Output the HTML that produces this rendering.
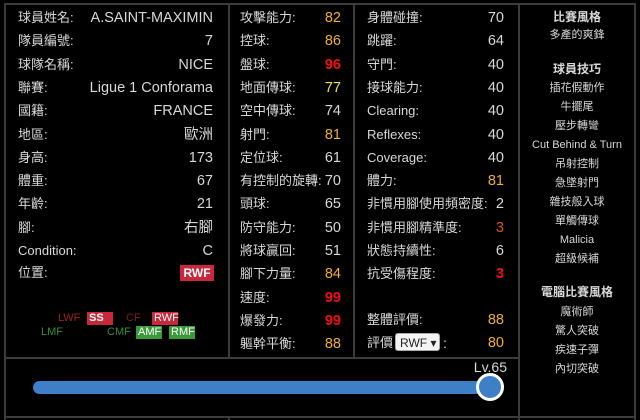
<!DOCTYPE html>
<html><head><meta charset="utf-8"><style>
body{margin:0;width:640px;height:420px;background:#000;overflow:hidden;font-family:"Liberation Sans","Noto Sans CJK TC",sans-serif;color:#d8d8d8;font-size:14px;position:relative}
.a{position:absolute;white-space:nowrap;line-height:16px}
.lb{font-size:13px}
.r{text-align:right;font-size:14.5px}
.line{position:absolute;background:#3c3c3c}
.y{color:#f0b030}.rd{color:#f01010;font-weight:bold}.g{color:#e8e840}.o{color:#e05020}
.c{position:absolute;text-align:center;width:120px;left:517px;font-size:11px;line-height:14px}
.b{font-weight:bold;font-size:12px}
.p{position:absolute;font-size:11px;line-height:13px;padding:0 2px}
</style></head><body>
<div class="line" style="left:4px;top:3px;width:632px;height:2px"></div>
<div class="line" style="left:4px;top:3px;width:2px;height:417px"></div>
<div class="line" style="left:228px;top:3px;width:2px;height:355px"></div>
<div class="line" style="left:353px;top:3px;width:2px;height:355px"></div>
<div class="line" style="left:518px;top:3px;width:2px;height:417px"></div>
<div class="line" style="left:634px;top:3px;width:2px;height:417px"></div>
<div class="line" style="left:4px;top:357px;width:516px;height:2px"></div>
<div class="line" style="left:4px;top:416px;width:632px;height:2px"></div>
<div class="line" style="left:228px;top:416px;width:2px;height:4px"></div>

<script>
function row(x,rx,y,l,v,cls){document.write('<div class="a lb" style="left:'+x+'px;top:'+(y-8)+'px">'+l+'</div><div class="a r '+(cls||'')+'" style="right:'+(640-rx)+'px;top:'+(y-8)+'px">'+v+'</div>');}
var ys=[];for(var i=0;i<14;i++)ys.push(Math.round(18+i*23.3));
var L=[["球員姓名:","A.SAINT-MAXIMIN"],["隊員編號:","7"],["球隊名稱:","NICE"],["聯賽:","Ligue 1 Conforama"],["國籍:","FRANCE"],["地區:","歐洲"],["身高:","173"],["體重:","67"],["年齡:","21"],["腳:","右腳"],["Condition:","C"]];
L.forEach(function(r,i){row(18,213,ys[i],r[0],r[1]);});
var M=[["攻擊能力:","82","y"],["控球:","86","y"],["盤球:","96","rd"],["地面傳球:","77","g"],["空中傳球:","74"],["射門:","81","y"],["定位球:","61"],["有控制的旋轉:","70"],["頭球:","65"],["防守能力:","50"],["將球贏回:","51"],["腳下力量:","84","y"],["速度:","99","rd"],["爆發力:","99","rd"],["軀幹平衡:","88","y"]];
M.forEach(function(r,i){row(240,341,Math.round(18+i*23.3),r[0],r[1],r[2]);});
var R=[["身體碰撞:","70"],["跳躍:","64"],["守門:","40"],["接球能力:","40"],["Clearing:","40"],["Reflexes:","40"],["Coverage:","40"],["體力:","81","y"],["非慣用腳使用頻密度:","2"],["非慣用腳精準度:","3","o"],["狀態持續性:","6"],["抗受傷程度:","3","rd"]];
R.forEach(function(r,i){row(367,504,ys[i],r[0],r[1],r[2]);});
row(367,504,320,"整體評價:","88","y");
row(367,504,343,"評價","80","y");
</script>
<div class="a lb" style="left:18px;top:265px">位置:</div>
<div class="a" style="left:180px;top:265px;width:34px;height:16px;background:#c8283a;color:#fff;font-weight:bold;font-size:12px;text-align:center">RWF</div>

<div class="p" style="left:56px;top:312px;color:#a02020">LWF</div>
<div class="p" style="left:87px;top:312px;width:22px;background:#c8283a;color:#fff;font-weight:bold">SS</div>
<div class="p" style="left:124px;top:312px;color:#7a2010">CF</div>
<div class="p" style="left:152px;top:312px;width:22px;background:#c8283a;color:#fff">RWF</div>
<div class="p" style="left:39px;top:326px;color:#3a8a3a">LMF</div>
<div class="p" style="left:105px;top:326px;color:#3a8a3a">CMF</div>
<div class="p" style="left:136px;top:326px;width:22px;background:#3a9a3a;color:#fff">AMF</div>
<div class="p" style="left:169px;top:326px;width:22px;background:#3a9a3a;color:#fff">RMF</div>

<div style="position:absolute;left:395px;top:333px;width:45px;height:18px;background:#f4f4f4;border:1px solid #aaa;border-radius:3px;color:#222;font-size:12px;line-height:18px;padding-left:4px;box-sizing:border-box">RWF ▾</div>
<div class="a" style="left:443px;top:335px">:</div>

<div class="a" style="right:133px;top:359px;font-size:14px">Lv.65</div>
<div style="position:absolute;left:33px;top:381px;width:460px;height:13px;background:#3d80c8;border-radius:7px"></div>
<div style="position:absolute;left:476px;top:373px;width:22px;height:22px;border-radius:50%;background:#3d80c8;border:3px solid #fff"></div>

<div class="c b" style="top:10px">比賽風格</div>
<div class="c" style="top:28px">多產的爽鋒</div>
<div class="c b" style="top:62px">球員技巧</div>
<div class="c" style="top:81px">插花假動作</div>
<div class="c" style="top:100px">牛擺尾</div>
<div class="c" style="top:119px">壓步轉彎</div>
<div class="c" style="top:138px">Cut Behind &amp; Turn</div>
<div class="c" style="top:157px">吊射控制</div>
<div class="c" style="top:176px">急墜射門</div>
<div class="c" style="top:195px">雜技般入球</div>
<div class="c" style="top:214px">單觸傳球</div>
<div class="c" style="top:233px">Malicia</div>
<div class="c" style="top:252px">超級候補</div>
<div class="c b" style="top:285px">電腦比賽風格</div>
<div class="c" style="top:305px">魔術師</div>
<div class="c" style="top:324px">驚人突破</div>
<div class="c" style="top:343px">疾速子彈</div>
<div class="c" style="top:362px">內切突破</div>
</body></html>
